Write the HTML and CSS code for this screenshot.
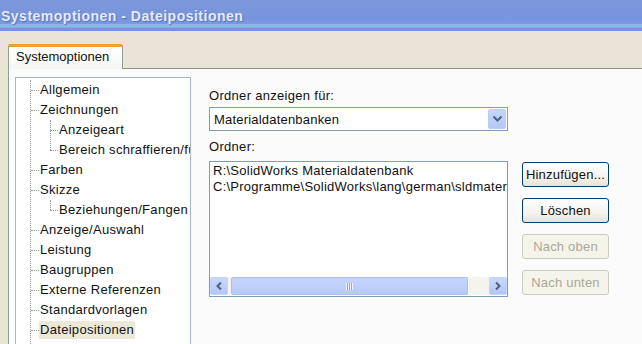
FILE: index.html
```html
<!DOCTYPE html>
<html lang="de">
<head>
<meta charset="utf-8">
<title>Systemoptionen - Dateipositionen</title>
<link rel="stylesheet" href="styles.css">
</head>
<body>
<div class="window">
  <div class="titlebar"><span class="title">Systemoptionen - Dateipositionen</span></div>
  <div class="main">
    <div class="tabs"><div class="tab">Systemoptionen</div></div>
    <div class="panel">
      <div class="tree">
        <ul class="lvl1">
          <li><span class="lbl">Allgemein</span></li>
          <li><span class="lbl">Zeichnungen</span>
            <ul class="lvl2 two">
              <li><span class="lbl">Anzeigeart</span></li>
              <li><span class="lbl">Bereich schraffieren/füllen</span></li>
            </ul>
          </li>
          <li><span class="lbl">Farben</span></li>
          <li><span class="lbl">Skizze</span>
            <ul class="lvl2 one">
              <li><span class="lbl">Beziehungen/Fangen</span></li>
            </ul>
          </li>
          <li><span class="lbl">Anzeige/Auswahl</span></li>
          <li><span class="lbl">Leistung</span></li>
          <li><span class="lbl">Baugruppen</span></li>
          <li><span class="lbl">Externe Referenzen</span></li>
          <li><span class="lbl">Standardvorlagen</span></li>
          <li><span class="lbl sel">Dateipositionen</span></li>
        </ul>
      </div>
      <div class="right">
        <div class="label">Ordner anzeigen für:</div>
        <div class="combo">
          <span class="combo-text">Materialdatenbanken</span>
          <span class="combo-btn">
            <svg width="11" height="8" viewBox="0 0 11 8"><path d="M1.5 1.5 L5.5 5.5 L9.5 1.5" fill="none" stroke="#4d6185" stroke-width="2"/></svg>
          </span>
        </div>
        <div class="label label2">Ordner:</div>
        <div class="row">
          <div class="listbox">
            <div class="lines">
              <div class="line">R:\SolidWorks Materialdatenbank</div>
              <div class="line">C:\Programme\SolidWorks\lang\german\sldmaterials</div>
            </div>
            <div class="hscroll">
              <span class="sbtn">
                <svg width="8" height="10" viewBox="0 0 8 10"><path d="M6 1.5 L2.5 5 L6 8.5" fill="none" stroke="#4d6185" stroke-width="2"/></svg>
              </span>
              <span class="thumb"><span class="grip"></span></span>
              <span class="track"></span>
              <span class="sbtn">
                <svg width="8" height="10" viewBox="0 0 8 10"><path d="M2 1.5 L5.5 5 L2 8.5" fill="none" stroke="#4d6185" stroke-width="2"/></svg>
              </span>
            </div>
          </div>
          <div class="buttons">
            <button class="btn">Hinzufügen...</button>
            <button class="btn">Löschen</button>
            <button class="btn disabled">Nach oben</button>
            <button class="btn disabled">Nach unten</button>
          </div>
        </div>
      </div>
    </div>
  </div>
</div>
</body>
</html>
```

FILE: styles.css
```css
html, body {
  margin: 0;
  padding: 0;
}
body {
  width: 642px;
  height: 344px;
  overflow: hidden;
  background: #ece6d8;
  font-family: "Liberation Sans", Arial, sans-serif;
  font-size: 13px;
  color: #111;
}
.window {
  display: flex;
  flex-direction: column;
  height: 344px;
}
.titlebar {
  height: 31px;
  flex: none;
  background: linear-gradient(to bottom,
    #7c96dc 0px, #7795dd 20px, #7a9ae4 24px,
    #93b4ea 24px, #93b4ea 26px,
    #7fc0e6 26px, #8aa8e8 28px,
    #7f8de6 28px, #7f8de6 31px);
  display: flex;
  align-items: flex-start;
}
.title {
  margin: 8px 0 0 1px;
  font-weight: bold;
  font-size: 14px;
  letter-spacing: 0.5px;
  color: #e4ebfb;
  text-shadow: 1px 1px 1px #5b73bd;
}
.main {
  flex: 1;
  display: flex;
  flex-direction: column;
  padding: 13px 0 0 8px;
  background: linear-gradient(to bottom, #ebe4d6 0, #ebe4d6 30px, #e6e6d2 37px);
}
.tabs {
  display: flex;
  height: 24px;
  flex: none;
}
.tab {
  width: 106px;
  border: 1px solid #919b9c;
  border-top: 3px solid #f0a030;
  border-bottom: none;
  border-radius: 2px 2px 0 0;
  background: linear-gradient(to bottom, #ffffff, #f6f6f2);
  padding-left: 7px;
  line-height: 20px;
  margin-bottom: -1px;
  position: relative;
  z-index: 1;
}
.panel {
  flex: 1;
  display: flex;
  border-top: 1px solid #8f9596;
  border-left: 1px solid #919b9c;
  background: #fbfbfc;
  padding: 8px 0 0 6px;
  min-height: 0;
}
.tree {
  width: 174px;
  flex: none;
  border: 1px solid #a5b4c8;
  border-bottom: none;
  background: #ffffff;
  padding-top: 2px;
  overflow: hidden;
}
.tree ul {
  list-style: none;
  margin: 0;
  padding: 0;
}
.lvl1 {
  margin-left: 14px !important;
  padding-bottom: 20px !important;
  border-left: 1px dotted #9a9a9a;
}
.lvl2 {
  margin-left: 19px !important;
  position: relative;
}
.lvl2::before {
  content: "";
  position: absolute;
  left: 0;
  top: 0;
  border-left: 1px dotted #9a9a9a;
}
.lvl2.two::before {
  height: 30px;
}
.lvl2.one::before {
  height: 10px;
}
.tree li {
  position: relative;
  white-space: nowrap;
}
.tree li::before {
  content: "";
  position: absolute;
  left: 0;
  top: 10px;
  width: 8px;
  border-top: 1px dotted #9a9a9a;
}
.lbl {
  display: inline-block;
  margin: 1px 0 1px 8px;
  padding: 0 1px;
  line-height: 18px;
  letter-spacing: 0.3px;
}
.lbl.sel {
  background: #ece9d8;
}
.right {
  display: flex;
  flex-direction: column;
  margin-left: 18px;
  padding-top: 11px;
}
.label {
  line-height: 16px;
  letter-spacing: 0.3px;
  margin-bottom: 3px;
}
.label2 {
  margin-top: 8px;
  margin-bottom: 6px;
}
.combo {
  width: 297px;
  height: 22px;
  border: 1px solid #7f9db9;
  background: #fff;
  display: flex;
  align-items: center;
  justify-content: space-between;
}
.combo-text {
  padding-left: 4px;
  letter-spacing: 0.2px;
}
.combo-btn {
  width: 18px;
  height: 20px;
  margin-right: 1px;
  border-radius: 2px;
  background: linear-gradient(to bottom, #c6d6fb, #b5c8f6);
  border: 1px solid #bccbf2;
  box-sizing: border-box;
  display: flex;
  align-items: center;
  justify-content: center;
}
.row {
  display: flex;
  gap: 14px;
}
.listbox {
  width: 297px;
  height: 134px;
  border: 1px solid #7f9db9;
  background: #fff;
  display: flex;
  flex-direction: column;
  justify-content: space-between;
}
.lines {
  padding: 1px 0 0 3px;
  overflow: hidden;
}
.line {
  line-height: 16px;
  white-space: nowrap;
  letter-spacing: 0.25px;
}
.hscroll {
  height: 18px;
  margin-bottom: 1px;
  display: flex;
  align-items: stretch;
  background: #f4f3ee;
}
.sbtn {
  width: 18px;
  flex: none;
  box-sizing: border-box;
  border: 1px solid #c3d3fd;
  border-radius: 2px;
  background: linear-gradient(to bottom, #c9d8fc, #b4c6f5);
  display: flex;
  align-items: center;
  justify-content: center;
}
.thumb {
  width: 237px;
  margin-left: 3px;
  box-sizing: border-box;
  border: 1px solid #aabff2;
  border-radius: 2px;
  background: linear-gradient(to bottom, #c6d5fc, #b7c9f6);
  display: flex;
  align-items: center;
  justify-content: center;
}
.grip {
  width: 7px;
  height: 7px;
  background: repeating-linear-gradient(to right, #eef3ff 0 1px, #8fa6e0 1px 2px);
}
.track {
  flex: 1;
}
.buttons {
  display: flex;
  flex-direction: column;
  gap: 11px;
  padding-top: 1px;
}
.btn {
  width: 87px;
  height: 25px;
  box-sizing: border-box;
  border: 1px solid #003c74;
  border-radius: 3px;
  background: linear-gradient(to bottom, #ffffff 0%, #f4f3ee 60%, #e6e3d6 100%);
  font-family: "Liberation Sans", Arial, sans-serif;
  font-size: 13px;
  letter-spacing: 0.2px;
  color: #111;
  padding: 0;
}
.btn.disabled {
  border-color: #cdcbbf;
  background: #f5f4ea;
  color: #aca899;
}
```
